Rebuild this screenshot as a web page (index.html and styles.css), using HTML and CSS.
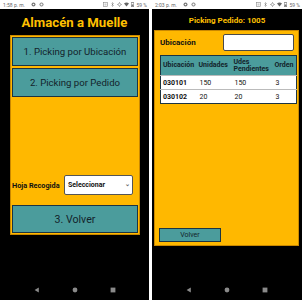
FILE: index.html
```html
<!DOCTYPE html>
<html lang="es">
<head>
<meta charset="utf-8">
<title>Almacén a Muelle</title>
<link rel="stylesheet" href="styles.css">
</head>
<body>
<div class="screens">
  <section class="phone">
    <div class="status">
      <div class="status-left">
        <span>1:58 p. m.</span>
        <svg class="sicon" viewBox="0 0 10 10"><circle cx="5" cy="5" r="4" fill="#777"/><circle cx="5" cy="5" r="1.6" fill="#fff"/></svg>
        <svg class="sicon" viewBox="0 0 10 10"><circle cx="5" cy="5" r="4" fill="#777"/><rect x="3" y="3" width="4" height="4" fill="#fff"/></svg>
      </div>
      <div class="status-right">
        <svg class="sicon" viewBox="0 0 10 10"><rect x="1" y="1" width="8" height="8" fill="none" stroke="#888" stroke-width="1.2"/><path d="M3 4h4M3 6h4" stroke="#888"/></svg>
        <svg class="sicon" viewBox="0 0 10 10"><path d="M3 3l4 4-2 2V1l2 2-4 4" fill="none" stroke="#777" stroke-width="1"/></svg>
        <svg class="sicon" viewBox="0 0 10 10"><circle cx="5" cy="5" r="2.5" fill="none" stroke="#777" stroke-width="1.2"/><path d="M5 0v2M5 8v2M0 5h2M8 5h2" stroke="#777"/></svg>
        <svg class="sicon" viewBox="0 0 10 10"><path d="M0 3Q5-1 10 3L5 9z" fill="#666"/></svg>
        <svg class="sicon batt" viewBox="0 0 6 10"><rect x="2" y="0" width="2" height="1" fill="#777"/><rect x="0.5" y="1" width="5" height="8.5" fill="none" stroke="#777"/><rect x="1" y="5" width="4" height="4" fill="#777"/></svg>
        <span>59 %</span>
      </div>
    </div>
    <h1 class="title">Almacén a Muelle</h1>
    <div class="panel panel-menu">
      <div class="btn btn-big">1. Picking por Ubicación</div>
      <div class="btn btn-big">2. Picking por Pedido</div>
      <div class="spacer"></div>
      <div class="hoja">
        <span class="hoja-label">Hoja Recogida</span>
        <div class="select"><span>Seleccionar</span><span class="caret">&#8964;</span></div>
      </div>
      <div class="btn btn-big">3. Volver</div>
    </div>
    <div class="spacer"></div>
    <nav class="navbar">
      <svg class="nav-icon" viewBox="0 0 10 10"><path d="M8 1v8L1 5z" fill="#8a8a8a"/></svg>
      <svg class="nav-icon" viewBox="0 0 10 10"><circle cx="5" cy="5" r="4" fill="#8a8a8a"/></svg>
      <svg class="nav-icon" viewBox="0 0 10 10"><rect x="1" y="1" width="8" height="8" fill="#8a8a8a"/></svg>
    </nav>
  </section>

  <section class="phone phone-right">
    <div class="status">
      <div class="status-left">
        <span>2:03 p. m.</span>
        <svg class="sicon" viewBox="0 0 10 10"><circle cx="5" cy="5" r="4" fill="#777"/><circle cx="5" cy="5" r="1.6" fill="#fff"/></svg>
        <svg class="sicon" viewBox="0 0 10 10"><circle cx="5" cy="5" r="4" fill="#777"/><rect x="3" y="3" width="4" height="4" fill="#fff"/></svg>
      </div>
      <div class="status-right">
        <svg class="sicon" viewBox="0 0 10 10"><rect x="1" y="1" width="8" height="8" fill="none" stroke="#888" stroke-width="1.2"/><path d="M3 4h4M3 6h4" stroke="#888"/></svg>
        <svg class="sicon" viewBox="0 0 10 10"><path d="M3 3l4 4-2 2V1l2 2-4 4" fill="none" stroke="#777" stroke-width="1"/></svg>
        <svg class="sicon" viewBox="0 0 10 10"><circle cx="5" cy="5" r="2.5" fill="none" stroke="#777" stroke-width="1.2"/><path d="M5 0v2M5 8v2M0 5h2M8 5h2" stroke="#777"/></svg>
        <svg class="sicon" viewBox="0 0 10 10"><path d="M0 3Q5-1 10 3L5 9z" fill="#666"/></svg>
        <svg class="sicon batt" viewBox="0 0 6 10"><rect x="2" y="0" width="2" height="1" fill="#777"/><rect x="0.5" y="1" width="5" height="8.5" fill="none" stroke="#777"/><rect x="1" y="5" width="4" height="4" fill="#777"/></svg>
        <span>59 %</span>
      </div>
    </div>
    <h2 class="title title-small">Picking Pedido: 1005</h2>
    <div class="panel panel-order">
      <div class="ubic-row">
        <span class="ubic-label">Ubicación</span>
        <div class="input"></div>
      </div>
      <table class="grid">
        <thead>
          <tr><th class="c1">Ubicación</th><th class="c2">Unidades</th><th class="c3">Udes Pendientes</th><th class="c4">Orden</th></tr>
        </thead>
        <tbody>
          <tr><td class="code">030101</td><td>150</td><td>150</td><td>3</td></tr>
          <tr><td class="code">030102</td><td>20</td><td>20</td><td>3</td></tr>
        </tbody>
      </table>
      <div class="spacer"></div>
      <div class="btn btn-small">Volver</div>
    </div>
    <div class="spacer"></div>
    <nav class="navbar">
      <svg class="nav-icon" viewBox="0 0 10 10"><path d="M8 1v8L1 5z" fill="#8a8a8a"/></svg>
      <svg class="nav-icon" viewBox="0 0 10 10"><circle cx="5" cy="5" r="4" fill="#8a8a8a"/></svg>
      <svg class="nav-icon" viewBox="0 0 10 10"><rect x="1" y="1" width="8" height="8" fill="#8a8a8a"/></svg>
    </nav>
  </section>
</div>
</body>
</html>
```

FILE: styles.css
```css
* { box-sizing: border-box; }
html, body { margin: 0; padding: 0; background: #fff; }
body { font-family: Roboto, "Liberation Sans", sans-serif; width: 302px; height: 300px; overflow: hidden; }

.screens { display: flex; gap: 3px; height: 300px; }

.phone { width: 149px; height: 300px; background: #000; display: flex; flex-direction: column; }
.phone-right { width: 150px; }

.status { height: 9px; background: #fff; display: flex; align-items: center; justify-content: space-between; padding: 0 2px 0 3px; font-size: 5px; color: #666; }
.status-left, .status-right { display: flex; align-items: center; gap: 3px; }
.status-left span { margin-right: 3px; }
.status-right { gap: 2px; }
.sicon { width: 5px; height: 5px; }
.sicon.batt { width: 3px; }

.title { margin: 0; height: 26px; display: flex; align-items: center; justify-content: center; color: #ffc000; font-weight: bold; font-size: 13.2px; }
.title-small { height: 21px; font-size: 8px; padding-top: 1px; }

.panel { background: #ffb800; border: 1px solid #c98800; display: flex; flex-direction: column; }
.panel-menu { margin: 0 9px 0 10px; height: 200px; padding: 1px; }
.panel-order { margin: 0 3px 0 2px; height: 216px; padding: 3px 2px 3px 5px; }

.btn { background: #4b9c9c; border: 1px solid #1c3442; color: #13232b; display: flex; align-items: center; justify-content: center; }
.btn-big { height: 29px; font-size: 9.6px; margin-bottom: 2px; }
.btn-big:last-child { height: 28px; margin-bottom: 0; font-size: 10.6px; }
.btn-small { width: 62px; height: 14px; font-size: 7px; margin-left: -1px; }

.spacer { flex: 1; }

.hoja { display: flex; align-items: center; height: 20px; margin-bottom: 10px; }
.hoja-label { font-weight: bold; font-size: 7.3px; color: #111; width: 52px; }
.select { width: 69px; height: 20px; background: #fff; border: 1px solid #555; border-radius: 2px; display: flex; align-items: center; justify-content: space-between; padding: 0 2px 0 3px; font-size: 7px; font-weight: bold; color: #111; }
.caret { font-size: 6px; color: #666; line-height: 1; margin-top: -3px; }

.ubic-row { display: flex; align-items: center; justify-content: space-between; height: 17px; padding-right: 2px; }
.ubic-label { font-weight: bold; font-size: 8px; color: #111; }
.input { width: 71px; height: 17px; background: #fff; border: 1px solid #4a4a4a; border-radius: 2px; }

.grid { margin-top: 4px; width: 136px; border-collapse: collapse; border: 1px solid #1c3442; font-size: 7px; table-layout: fixed; }
.grid th { background: #4b9c9c; color: #13232b; font-weight: bold; text-align: left; height: 20px; padding: 0 1px 0 2px; line-height: 7px; vertical-align: middle; }
.grid td { background: #fff; color: #111; height: 14px; padding: 0 1px 0 3px; border-top: 1px solid #bbb; }
.grid td.code { font-weight: bold; padding-left: 2px; }
.grid .c1 { width: 36px; }
.grid .c2 { width: 35px; }
.grid .c3 { width: 41px; }
.grid .c4 { width: 24px; }

.navbar { height: 20px; display: flex; align-items: center; justify-content: center; gap: 32px; }
.nav-icon { width: 6px; height: 6px; }
```
